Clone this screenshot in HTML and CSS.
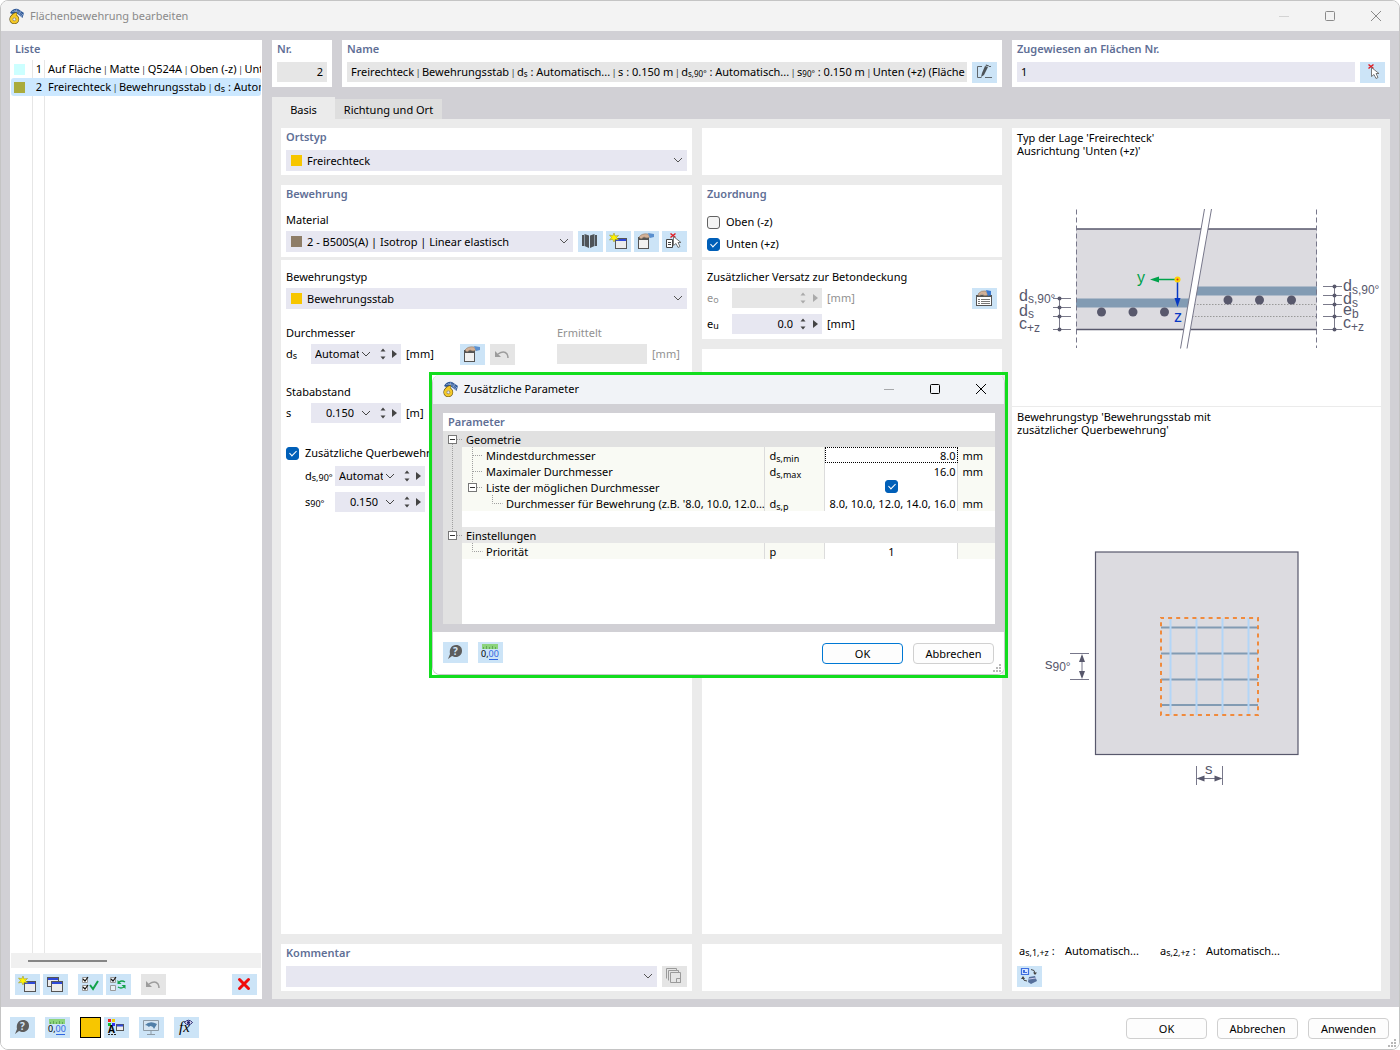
FILE: index.html
```html
<!doctype html>
<html lang="de">
  <head>
    <meta charset="UTF-8" />
    <title>Flächenbewehrung bearbeiten</title>
    <link rel="stylesheet" href="styles.css">
  </head>
  <body>
    <!-- icon sprite, buttons use a 25x21 box -->
    <svg class="sprite" width="0" height="0">
      <symbol id="i-logo" viewBox="0 0 16 16">
        <path d="M2 5Q5 0 10 1L16 5L14.500 10L11 7Q8 4 4 6z" fill="#2d5796" />
        <path d="M4 3.500Q10 2 14 9M6 2.500Q11 2 15 7M8 4L9 1M11 6L13 3M13 8.500l2.500-3" stroke="#a9bfe0" fill="none" stroke-width=".6" />
        <path d="M9 6Q4.500 6.500 3.500 11.500" fill="none" stroke="#6b5a1d" stroke-width="3.800" />
        <circle cx="6.300" cy="11.300" r="3" fill="none" stroke="#6b5a1d" stroke-width="3.800" />
        <path d="M8.600 6Q4.500 6.500 3.500 11.500" fill="none" stroke="#f5c928" stroke-width="2.400" />
        <circle cx="6.300" cy="11.300" r="3" fill="#fff" stroke="#f5c928" stroke-width="2.600" />
        <circle cx="6.300" cy="11.300" r="1.500" fill="#eee" stroke="#6b5a1d" stroke-width=".6" />
      </symbol>
      <symbol id="i-new" viewBox="0 0 25 21">
        <rect x="9.500" y="7.500" width="11" height="10" fill="#ececec" stroke="#555" />
        <path d="M10 9h10" stroke="#2f49d8" stroke-width="2" />
        <path d="M8 2l1 3 3.500-.5L10.500 6.500 12.500 9 9.200 8.300 8 11 6.600 8.300 3.500 9 5.500 6.500 3.500 4 6.800 4.700z" fill="#fff200" stroke="#a09a30" stroke-width=".6" />
      </symbol>
      <symbol id="i-windows" viewBox="0 0 25 21">
        <rect x="4.500" y="3.500" width="11" height="9" fill="#ececec" stroke="#555" />
        <path d="M5 5h10" stroke="#2f49d8" stroke-width="2" />
        <rect x="8.500" y="7.500" width="11" height="10" fill="#ececec" stroke="#555" />
        <path d="M9 9h10" stroke="#2f49d8" stroke-width="2" />
      </symbol>
      <symbol id="i-check-all" viewBox="0 0 25 21">
        <path d="M4.500 3.500h5v5h-5zM4.500 11.500h5v5h-5z" fill="#fff" stroke="#999" />
        <path d="M5 5l2 2 3-4M5 13l2 2 3-4" stroke="#111" stroke-width="1.200" fill="none" />
        <path d="M12 11l3 4 5-8" stroke="#12a34a" stroke-width="2" fill="none" />
      </symbol>
      <symbol id="i-check-swap" viewBox="0 0 25 21">
        <path d="M4.500 3.500h5v5h-5zM4.500 11.500h5v5h-5z" fill="#e6eef6" stroke="#999" />
        <path d="M5 5l2 2 3-4" stroke="#111" stroke-width="1.200" fill="none" />
        <path d="M19 8q-3-2-6 0M12 13q3 2 6 0" stroke="#12a34a" stroke-width="1.500" fill="none" />
        <path d="M11.500 6v4h4zM19.500 15v-4h-4z" fill="#12a34a" />
      </symbol>
      <symbol id="i-undo" viewBox="0 0 25 21">
        <path d="M8 10q6-4 9 0q1 2 1 4" stroke="#9c9c9c" stroke-width="1.500" fill="none" />
        <path d="M5 7v6h6z" fill="#9c9c9c" />
      </symbol>
      <symbol id="i-delete" viewBox="0 0 25 21">
        <path d="M7.500 5.500l9 9M16.500 5.500l-9 9" stroke="#f00c0c" stroke-width="3" stroke-linecap="round" />
      </symbol>
      <symbol id="i-monitor" viewBox="0 0 25 21">
        <path d="M4.500 3.500h15v10h-15zM12 14v3M8 17.500h8" stroke="#8d9aa5" fill="#d5e5f2" />
        <path d="M6 8q5-5 12-1l-3 5q-1-3-4-3l-1 1q-2-2-4-2z" fill="#517fa8" />
      </symbol>
      <symbol id="i-book" viewBox="0 0 25 21">
        <path d="M4 4h2v11H4zM17 4h2v11h-2zM6.500 3l4.500 1.500V17L6.500 15zM16.500 3L12 4.500V17l4.500-2z" fill="#4f5458" />
      </symbol>
      <symbol id="i-edit" viewBox="0 0 25 21">
        <rect x="4.500" y="6.500" width="10" height="11" fill="#f1f1f1" stroke="#555" />
        <path d="M5 8h9" stroke="#555" stroke-width="2" />
        <path d="M5 6Q8 2 14 3L16 6Q13 8 10 6L7 8z" fill="#d3b198" stroke="#8d7a68" stroke-width=".6" />
        <path d="M14 2l6 1v3l-4 1z" fill="#5b90cf" />
      </symbol>
      <symbol id="i-edit-list" viewBox="0 0 25 21">
        <rect x="4.500" y="7.500" width="15" height="10" fill="#fff" stroke="#555" />
        <path d="M4 8h16" stroke="#555" stroke-width="2" />
        <path d="M6 11.500h2M9 11.500h9M6 13.500h2M9 13.500h9M6 15.500h2M9 15.500h9" stroke="#777" />
        <path d="M6 6Q9 2 14 3L16 7Q12 9 10 6L7 8z" fill="#d3b198" stroke="#8d7a68" stroke-width=".6" />
        <path d="M14 2l5 1v4l-3 1z" fill="#3a78d0" />
      </symbol>
      <symbol id="i-pick" viewBox="0 0 25 21">
        <path d="M8.500 2.500l5 4M13.500 2.500l-5 4" stroke="#e01f26" stroke-width="1.500" />
        <path d="M11.500 5.500v9l2.500-2 2 4 2-1-2-4h3z" fill="#fff" stroke="#6a6a6a" stroke-width=".9" />
      </symbol>
      <symbol id="i-pick-list" viewBox="0 0 25 21">
        <path d="M4.500 8.500h6v8h-6z" fill="#fff" stroke="#444" />
        <path d="M6 11.500h3M6 13.500h3" stroke="#444" />
        <path d="M8.500 2.500l5 4M13.500 2.500l-5 4" stroke="#e01f26" stroke-width="1.500" />
        <path d="M11.500 5.500v9l2.500-2 2 4 2-1-2-4h3z" fill="#fff" stroke="#6a6a6a" stroke-width=".9" />
      </symbol>
      <symbol id="i-pencil" viewBox="0 0 25 21">
        <path d="M10 4.500H5.500v11h4M13 15.500h7M17 4.500h2" stroke="#5f676d" fill="none" />
        <path d="M13 4l3 1-4 8-3 2 1-4zM14 2.500l3 1-.5 1-3-1z" fill="#4c5358" />
      </symbol>
      <symbol id="i-copy" viewBox="0 0 25 21">
        <path d="M4.500 12.500v-10h10v2M6.500 14.500v-10h10v2M8.500 6.500h10v10h-10z" fill="none" stroke="#9a9a9a" />
        <path d="M14.500 12.500h4v4h-4z" fill="none" stroke="#9a9a9a" />
      </symbol>
      <symbol id="i-view" viewBox="0 0 25 21">
        <path d="M4.500 2.500h7v6h-7z" fill="#dbe8ff" stroke="#3e6fe0" stroke-width="1.200" />
        <path d="M6 4h2v2h2v1H6z" fill="#3e6fe0" />
        <path d="M14 3.500q4 0 4 4M6 12q0 3 4 3" fill="none" stroke="#444" />
        <path d="M16 6.500h4L18 9zM4 13l2-3 2 3z" fill="#444" />
        <path d="M12 11l6-1 2 5-6 3-3-2z" fill="#56709c" /><path d="M12 13l7-1" stroke="#cce" />
      </symbol>
      <symbol id="i-down" viewBox="0 0 10 6"><path d="M1 1l4 4 4-4" fill="none" stroke="currentColor" /></symbol>
      <symbol id="i-updown" viewBox="0 0 6 12"><path d="M.5 3.500L3 .5l2.500 3zM.5 8.500h5L3 11.500z" fill="currentColor" /></symbol>
      <symbol id="i-right" viewBox="0 0 5 8"><path d="M0 0l5 4-5 4z" fill="currentColor" /></symbol>
      <symbol id="i-min" viewBox="0 0 12 12"><path d="M1 6.500h10" stroke="currentColor" /></symbol>
      <symbol id="i-max" viewBox="0 0 12 12"><rect x="1.500" y="1.500" width="9" height="9" rx="1" fill="none" stroke="currentColor" /></symbol>
      <symbol id="i-close" viewBox="0 0 12 12"><path d="M1 1l10 10M11 1L1 11" stroke="currentColor" /></symbol>
      <symbol id="i-grip" viewBox="0 0 9 9">
        <path d="M6 0h2v2H6zM6 3h2v2H6zM3 3h2v2H3zM6 6h2v2H6zM3 6h2v2H3zM0 6h2v2H0z" fill="#b8b8b8" />
      </symbol>
    </svg>

    <div class="window">
      <header class="titlebar">
        <svg class="logo"><use href="#i-logo" /></svg>
        <h1>Flächenbewehrung bearbeiten</h1>
        <div class="controls">
          <button class="faint" aria-label="Minimieren"><svg><use href="#i-min" /></svg></button>
          <button aria-label="Maximieren"><svg><use href="#i-max" /></svg></button>
          <button aria-label="Schließen"><svg><use href="#i-close" /></svg></button>
        </div>
      </header>

      <div class="workspace">
        <aside class="list">
          <h2>Liste</h2>
          <ul>
            <li><i class="cyan"></i><b>1</b><span>Auf Fläche <s>|</s> Matte <s>|</s> Q524A <s>|</s> Oben (-z) <s>|</s> Unten</span></li>
            <li class="selected"><i class="olive"></i><b>2</b><span>Freirechteck <s>|</s> Bewehrungsstab <s>|</s> d<sub>s</sub> : Autom</span></li>
          </ul>
          <div class="scrollbar"><div class="thumb"></div></div>
          <div class="toolbar">
            <button class="tool" aria-label="Neu"><svg><use href="#i-new" /></svg></button>
            <button class="tool" aria-label="Kopieren"><svg><use href="#i-windows" /></svg></button>
            <button class="tool split" aria-label="Alle wählen"><svg><use href="#i-check-all" /></svg></button>
            <button class="tool" aria-label="Auswahl umkehren"><svg><use href="#i-check-swap" /></svg></button>
            <button class="tool split" aria-label="Rückgängig" disabled><svg><use href="#i-undo" /></svg></button>
            <button class="tool last" aria-label="Löschen"><svg><use href="#i-delete" /></svg></button>
          </div>
        </aside>

        <main>
          <div class="head">
            <section class="card">
              <h2><label for="nr">Nr.</label></h2>
              <input class="box readonly num" id="nr" value="2" readonly>
            </section>
            <section class="card">
              <h2>Name</h2>
              <div class="row">
                <div class="box readonly name">Freirechteck <s>|</s> Bewehrungsstab <s>|</s> d<sub>s</sub> : Automatisch... <s>|</s> s : 0.150 m <s>|</s> d<sub>s,90°</sub> : Automatisch... <s>|</s> s<sub>90°</sub> : 0.150 m <s>|</s> Unten (+z) (Fläche</div>
                <button class="tool" aria-label="Name bearbeiten"><svg><use href="#i-pencil" /></svg></button>
              </div>
            </section>
            <section class="card">
              <h2><label for="assigned">Zugewiesen an Flächen Nr.</label></h2>
              <div class="row">
                <input class="box grow" id="assigned" value="1">
                <button class="tool" aria-label="Fläche wählen"><svg><use href="#i-pick" /></svg></button>
              </div>
            </section>
          </div>

          <nav class="tabs">
            <button class="tab active">Basis</button>
            <button class="tab">Richtung und Ort</button>
          </nav>

          <div class="panel">
            <section class="card end">
              <h2><label for="place">Ortstyp</label></h2>
              <div class="select">
                <i class="yellow"></i>
                <select id="place"><option>Freirechteck</option></select>
                <svg><use href="#i-down" /></svg>
              </div>
            </section>
            <section class="card end"></section>

            <section class="card">
              <h2>Bewehrung</h2>
              <label class="caption" for="material">Material</label>
              <div class="row tight">
                <div class="select">
                  <i class="brown"></i>
                  <select id="material"><option>2 - B500S(A) | Isotrop | Linear elastisch</option></select>
                  <svg><use href="#i-down" /></svg>
                </div>
                <button class="tool first" aria-label="Bibliothek"><svg><use href="#i-book" /></svg></button>
                <button class="tool" aria-label="Neues Material"><svg><use href="#i-new" /></svg></button>
                <button class="tool" aria-label="Material bearbeiten"><svg><use href="#i-edit" /></svg></button>
                <button class="tool" aria-label="Material wählen"><svg><use href="#i-pick-list" /></svg></button>
              </div>
            </section>
            <section class="card">
              <h2>Zuordnung</h2>
              <div class="checks">
                <label class="check"><input type="checkbox">Oben (-z)</label>
                <label class="check"><input type="checkbox" checked>Unten (+z)</label>
              </div>
            </section>

            <section class="card end">
              <label class="caption" for="type">Bewehrungstyp</label>
              <div class="select">
                <i class="yellow"></i>
                <select id="type"><option>Bewehrungsstab</option></select>
                <svg><use href="#i-down" /></svg>
              </div>
              <div class="diameter">
                <div class="diameter-value">
                  <label class="caption" for="ds">Durchmesser</label>
                  <div class="row">
                    <span class="symbol">d<sub>s</sub></span>
                    <div class="spin combo"><input id="ds" value="Automatisch"><svg class="down"><use href="#i-down" /></svg><svg class="updown"><use href="#i-updown" /></svg><svg class="right"><use href="#i-right" /></svg></div>
                    <span>[mm]</span>
                    <button class="tool last" aria-label="Parameter"><svg><use href="#i-edit" /></svg></button>
                    <button class="tool" aria-label="Zurücksetzen" disabled><svg><use href="#i-undo" /></svg></button>
                  </div>
                </div>
                <div class="muted">
                  <label class="caption" for="found">Ermittelt</label>
                  <div class="row">
                    <input class="box readonly found" id="found" disabled>
                    <span>[mm]</span>
                  </div>
                </div>
              </div>
              <label class="caption far" for="spacing">Stababstand</label>
              <div class="row">
                <span class="symbol">s</span>
                <div class="spin combo num"><input id="spacing" value="0.150"><svg class="down"><use href="#i-down" /></svg><svg class="updown"><use href="#i-updown" /></svg><svg class="right"><use href="#i-right" /></svg></div>
                <span>[m]</span>
              </div>
              <label class="check cross"><input type="checkbox" checked>Zusätzliche Querbewehrung</label>
              <div class="row nested">
                <label class="symbol" for="ds90">d<sub>s,90°</sub></label>
                <div class="spin combo"><input id="ds90" value="Automatisch"><svg class="down"><use href="#i-down" /></svg><svg class="updown"><use href="#i-updown" /></svg><svg class="right"><use href="#i-right" /></svg></div>
                <span>[mm]</span>
              </div>
              <div class="row nested">
                <label class="symbol" for="s90">s<sub>90°</sub></label>
                <div class="spin combo num"><input id="s90" value="0.150"><svg class="down"><use href="#i-down" /></svg><svg class="updown"><use href="#i-updown" /></svg><svg class="right"><use href="#i-right" /></svg></div>
                <span>[m]</span>
              </div>
            </section>
            <div class="stack end">
              <section class="card offset">
                <span class="caption">Zusätzlicher Versatz zur Betondeckung</span>
                <div class="row muted">
                  <label class="symbol" for="eo">e<sub>o</sub></label>
                  <div class="spin off"><input id="eo" disabled><svg class="updown"><use href="#i-updown" /></svg><svg class="right"><use href="#i-right" /></svg></div>
                  <span>[mm]</span>
                  <button class="tool last" aria-label="Versatz bearbeiten"><svg><use href="#i-edit-list" /></svg></button>
                </div>
                <div class="row next">
                  <label class="symbol" for="eu">e<sub>u</sub></label>
                  <div class="spin num"><input id="eu" value="0.0"><svg class="updown"><use href="#i-updown" /></svg><svg class="right"><use href="#i-right" /></svg></div>
                  <span>[mm]</span>
                </div>
              </section>
              <section class="card grow"></section>
            </div>

            <section class="card">
              <h2><label for="comment">Kommentar</label></h2>
              <div class="row">
                <div class="select">
                  <select id="comment"><option></option></select>
                  <svg><use href="#i-down" /></svg>
                </div>
                <button class="tool" aria-label="Kommentare" disabled><svg><use href="#i-copy" /></svg></button>
              </div>
            </section>
            <section class="card"></section>

            <section class="card preview">
              <div class="preview-top">
                <p>Typ der Lage 'Freirechteck'<br>Ausrichtung 'Unten (+z)'</p>
                <svg class="drawing" viewBox="0 0 369 160">
                  <path d="M64 29H305V130H64z" fill="#dcdbe0" />
                  <path d="M64 98.500H177V107.500H64zM184 86.500H305V95.500H184z" fill="#829bb3" />
                  <path d="M64 29H305M64 129.500H305" stroke="#58586c" stroke-width="1.600" />
                  <path d="M179 104.500H305M177 116.500H305" stroke="#999" stroke-dasharray="1.500 1.500" />
                  <path d="M192.500 9L199.500 9L175 148.500H168.500z" fill="#fff" />
                  <path d="M192.500 9L168.500 148.500M199.500 9L175 148.500" stroke="#77778a" />
                  <path d="M64.500 9.500V148M304.500 9.500V148" stroke="#77778a" stroke-dasharray="5 3" />
                  <g fill="#58586c">
                    <circle cx="89.500" cy="112" r="4.500" /><circle cx="121" cy="112" r="4.500" /><circle cx="152.500" cy="112" r="4.500" />
                    <circle cx="216" cy="100" r="4.500" /><circle cx="247.500" cy="100" r="4.500" /><circle cx="279.500" cy="100" r="4.500" />
                    <circle cx="47.500" cy="98.500" r="2" /><circle cx="47.500" cy="107.500" r="2" /><circle cx="47.500" cy="116.500" r="2" /><circle cx="47.500" cy="129.500" r="2" />
                    <circle cx="322.500" cy="86.500" r="2" /><circle cx="322.500" cy="95.500" r="2" /><circle cx="322.500" cy="104.500" r="2" /><circle cx="322.500" cy="116.500" r="2" /><circle cx="322.500" cy="129.500" r="2" />
                    <text x="7" y="101">d<tspan class="sub" dy="2">s,90°</tspan></text>
                    <text x="7" y="116">d<tspan class="sub" dy="2">s</tspan></text>
                    <text x="7" y="129">c<tspan class="sub" dy="3">+z</tspan></text>
                    <text x="331" y="91">d<tspan class="sub" dy="3">s,90°</tspan></text>
                    <text x="331" y="104">d<tspan class="sub" dy="3">s</tspan></text>
                    <text x="331" y="115">e<tspan class="sub" dy="3">b</tspan></text>
                    <text x="331" y="128">c<tspan class="sub" dy="3">+z</tspan></text>
                  </g>
                  <path d="M47.500 98v32M41 98.500h18M41 107.500h18M41 116.500h18M41 129.500h18M322.500 86v44M311 86.500h19M311 95.500h19M311 104.500h19M311 116.500h19M311 129.500h19" stroke="#58586c" fill="none" stroke-width=".8" />
                  <path d="M163 79.500H145" stroke="#00a24b" stroke-width="1.500" /><path d="M138 79.500l9-3v6z" fill="#00a24b" />
                  <path d="M165.500 82v16" stroke="#0638c4" stroke-width="1.500" /><path d="M165.500 107l-3-9h6z" fill="#0638c4" />
                  <circle cx="165.500" cy="79.500" r="3" fill="#ffd500" /><circle cx="165.500" cy="79.500" r="1" fill="#d22" />
                  <text x="125" y="83" fill="#00a24b">y</text>
                  <text x="162" y="122" fill="#0638c4">z</text>
                </svg>
              </div>
              <div class="preview-bottom">
                <p>Bewehrungstyp 'Bewehrungsstab mit<br>zusätzlicher Querbewehrung'</p>
                <svg class="drawing" viewBox="0 0 369 260">
                  <rect x="83.500" y="12" width="202.500" height="202.500" fill="#dcdbe0" stroke="#58586c" stroke-width="1.200" />
                  <path d="M149 87.500h97M149 113.500h97M149 139.500h97M149 165h97" stroke="#829bb3" stroke-width="2" />
                  <path d="M158.500 78v97M184.500 78v97M210.500 78v97M236.500 78v97" stroke="#b3d6f7" stroke-width="2" />
                  <rect x="149" y="78" width="97" height="97" fill="none" stroke="#f08a3c" stroke-width="2" stroke-dasharray="4 4.100" stroke-dashoffset="1" />
                  <path d="M58 113.500h19M58 139.500h19M184.500 226v19M210.500 226v19M70 116v21M187 238.500h21" stroke="#77778a" fill="none" />
                  <path d="M70 114l3 8h-6zM70 139l3-8h-6zM184.500 238.500l8-3v6zM210.500 238.500l-8-3v6z" fill="#58586c" />
                  <text x="33" y="129" fill="#58586c" class="dim">s<tspan class="sub" dy="2">90°</tspan></text>
                  <text x="193" y="234" fill="#58586c" class="dim">s</text>
                </svg>
                <div class="areas">
                  <span>a<sub>s,1,+z</sub> :</span><span>Automatisch...</span>
                  <span>a<sub>s,2,+z</sub> :</span><span>Automatisch...</span>
                </div>
                <button class="tool" aria-label="Ansicht wechseln"><svg><use href="#i-view" /></svg></button>
              </div>
            </section>
          </div>
        </main>
      </div>

      <footer>
        <button class="tool" aria-label="Hilfe">
          <svg viewBox="0 0 25 21">
            <path d="M13 3c4 0 6 2.500 6 6s-3 6-6 6c-1.500 0-3-.5-4-1l-4 3 2-5c-1-5 1.500-9 6-9z" fill="#5d5d5d" />
            <text x="10" y="13" class="help-text">?</text>
          </svg>
        </button>
        <button class="tool" aria-label="Einheiten">
          <svg viewBox="0 0 25 21">
            <path d="M4 2h16v5H4z" fill="#8cd47c" />
            <path d="M5.500 5v2M8.500 4v3M11.500 5v2M14.500 4v3M17.500 5v2" stroke="#448a3c" stroke-width=".6" />
            <text x="3" y="15" class="unit-text">0,<tspan fill="#2f66e0">00</tspan></text>
            <path d="M11 17.500h9" stroke="#2f66e0" />
          </svg>
        </button>
        <div class="pair">
          <button class="color" aria-label="Farbe"></button>
          <button class="tool" aria-label="Anzeige">
            <svg viewBox="0 0 25 21">
              <path d="M4 2h3v3H4z" fill="#e22" /><path d="M8 2h3v3H8z" fill="#ec0" />
              <path d="M4 6h3v3H4z" fill="#1b3" /><path d="M8 6h3v3H8z" fill="#33e" />
              <text x="4" y="16" class="letter-text">A</text>
              <path d="M4 17.500h9" stroke="#222" stroke-dasharray="2 1" />
              <rect x="12.500" y="7.500" width="7" height="6" fill="#ececec" stroke="#555" />
              <path d="M13 8.500h6" stroke="#2f49d8" stroke-width="2" />
            </svg>
          </button>
        </div>
        <button class="tool" aria-label="Vorschau"><svg><use href="#i-monitor" /></svg></button>
        <button class="tool" aria-label="Formel">
          <svg viewBox="0 0 25 21">
            <text x="5" y="15" class="fx-text">fx</text>
            <path d="M10.500 5.500q4-4.500 8 0q-4 4.500-8 0z" fill="#eef" stroke="#24246e" />
            <circle cx="14.500" cy="5.500" r="1.600" fill="#24246e" />
          </svg>
        </button>
        <div class="actions">
          <button class="push">OK</button>
          <button class="push">Abbrechen</button>
          <button class="push">Anwenden</button>
        </div>
        <svg class="grip"><use href="#i-grip" /></svg>
      </footer>
    </div>

    <div class="highlight">
      <div class="dialog" role="dialog" aria-labelledby="dialog-title">
        <header class="titlebar">
          <svg class="logo"><use href="#i-logo" /></svg>
          <h1 id="dialog-title">Zusätzliche Parameter</h1>
          <div class="controls">
            <button class="faint" aria-label="Minimieren"><svg><use href="#i-min" /></svg></button>
            <button aria-label="Maximieren"><svg><use href="#i-max" /></svg></button>
            <button aria-label="Schließen"><svg><use href="#i-close" /></svg></button>
          </div>
        </header>
        <div class="dialog-body">
          <div class="params">
            <h2>Parameter</h2>
            <div class="tree">
              <table>
                <colgroup><col class="c-gutter"><col><col class="c-symbol"><col class="c-value"><col class="c-unit"></colgroup>
                <tr class="group dark"><td><button class="toggle" aria-label="Zuklappen"></button></td><th colspan="4">Geometrie</th></tr>
                <tr><td></td><td class="l1">Mindestdurchmesser</td><td>d<sub>s,min</sub></td><td class="value focus">8.0</td><td>mm</td></tr>
                <tr><td></td><td class="l1">Maximaler Durchmesser</td><td>d<sub>s,max</sub></td><td class="value">16.0</td><td>mm</td></tr>
                <tr><td></td><td class="l1"><button class="toggle inner" aria-label="Zuklappen"></button>Liste der möglichen Durchmesser</td><td></td><td class="value center"><input type="checkbox" checked aria-label="Liste der möglichen Durchmesser"></td><td></td></tr>
                <tr><td></td><td class="l2">Durchmesser für Bewehrung (z.B. '8.0, 10.0, 12.0...</td><td>d<sub>s,p</sub></td><td class="value">8.0, 10.0, 12.0, 14.0, 16.0</td><td>mm</td></tr>
                <tr class="blank"><td></td><td colspan="4"></td></tr>
                <tr class="group"><td><button class="toggle" aria-label="Zuklappen"></button></td><th colspan="4">Einstellungen</th></tr>
                <tr><td></td><td class="l1">Priorität</td><td>p</td><td class="value center">1</td><td></td></tr>
              </table>
              <svg class="branches" width="70" height="128">
                <path d="M9.500 13V100M14 8.500h6M14 104.500h6M29.500 16V52M30 24.500h10M30 40.500h10M34 56.500h6M49.500 64v8.500h10M29.500 112v8.500h10" />
              </svg>
            </div>
          </div>
        </div>
        <footer>
          <button class="tool" aria-label="Hilfe">
            <svg viewBox="0 0 25 21">
              <path d="M13 3c4 0 6 2.500 6 6s-3 6-6 6c-1.500 0-3-.5-4-1l-4 3 2-5c-1-5 1.500-9 6-9z" fill="#5d5d5d" />
              <text x="10" y="13" class="help-text">?</text>
            </svg>
          </button>
          <button class="tool" aria-label="Einheiten">
            <svg viewBox="0 0 25 21">
              <path d="M4 2h16v5H4z" fill="#8cd47c" />
              <path d="M5.500 5v2M8.500 4v3M11.500 5v2M14.500 4v3M17.500 5v2" stroke="#448a3c" stroke-width=".6" />
              <text x="3" y="15" class="unit-text">0,<tspan fill="#2f66e0">00</tspan></text>
              <path d="M11 17.500h9" stroke="#2f66e0" />
            </svg>
          </button>
          <div class="actions">
            <button class="push primary">OK</button>
            <button class="push">Abbrechen</button>
          </div>
          <svg class="grip"><use href="#i-grip" /></svg>
        </footer>
      </div>
    </div>
  </body>
</html>
```

FILE: styles.css
```css
* {
  box-sizing: border-box;
}
body {
  margin: 0;
  position: relative;
  font-family: "Noto Sans", "Open Sans", sans-serif;
  font-size: 11px;
  line-height: 16px;
  color: #000;
  background: #fff;
}
button,
input,
select {
  font: inherit;
  color: inherit;
  margin: 0;
  padding: 0;
  border: 0;
  border-radius: 0;
  background: none;
  outline: none;
}
h1,
h2,
p,
ul {
  margin: 0;
  padding: 0;
}
h1 {
  font-size: 11px;
  font-weight: 400;
}
h2 {
  font-size: 11px;
  line-height: 18px;
  font-weight: 600;
  color: #5f6f96;
}
sub {
  font-size: 9px;
  line-height: 0;
  vertical-align: -1px;
}
/* thin separator bar */
s {
  font-family: "Liberation Serif", serif;
  text-decoration: none;
}
.sprite {
  position: absolute;
}
.window {
  min-height: 100vh;
  display: flex;
  flex-direction: column;
  border: 1px solid #c4c4c4;
  border-radius: 8px;
  overflow: hidden;
}

/* title bars */
.titlebar {
  height: 30px;
  display: flex;
  align-items: center;
  gap: 6px;
  padding-left: 7px;
  background: #f3f3f3;
  color: #8a8a8a;
}
.logo {
  width: 16px;
  height: 16px;
}
.controls {
  margin-left: auto;
  display: flex;
}
.controls button {
  width: 46px;
  height: 26px;
  display: flex;
  align-items: center;
  justify-content: center;
}
.controls svg {
  width: 12px;
  height: 12px;
}
.controls .faint {
  opacity: 0.3;
}

.workspace {
  flex: 1;
  display: flex;
  gap: 10px;
  padding: 9px 9px 8px;
  background: #d1d0d5;
}

/* list on the left */
.list {
  flex: none;
  width: 252px;
  display: flex;
  flex-direction: column;
  background: #fff;
  padding-bottom: 4px;
}
.list h2 {
  padding: 0 5px;
}
.list ul {
  flex: 1;
  list-style: none;
  margin: 2px 1px 0;
  background: linear-gradient(#e6e6e6, #e6e6e6) 21px 0 / 1px 100% no-repeat,
    linear-gradient(#e6e6e6, #e6e6e6) 33px 0 / 1px 100% no-repeat;
}
.list li {
  height: 18px;
  line-height: 18px;
  display: flex;
  align-items: center;
  padding-left: 3px;
  white-space: nowrap;
  overflow: hidden;
  border-radius: 3px;
}
.list li.selected {
  background: #cce8ff;
}
.list i {
  flex: none;
  width: 11px;
  height: 11px;
}
.list b {
  flex: none;
  width: 17px;
  margin-right: 6px;
  text-align: right;
  font-weight: 400;
}
.scrollbar {
  height: 15px;
  margin: 0 1px 6px;
  background: #f0f0f0;
  display: flex;
  align-items: center;
}
.thumb {
  width: 79px;
  height: 2px;
  margin-left: 17px;
  background: #868686;
}
.toolbar {
  display: flex;
  gap: 3px;
  padding: 0 5px;
}
.toolbar .split {
  margin-left: 7px;
}

.cyan {
  background: #ccffff;
}
.olive {
  background: #aaab3c;
}
.yellow {
  background: #f7c600;
}
.brown {
  background: #8e7d67;
}

/* buttons */
.tool {
  flex: none;
  width: 25px;
  height: 21px;
  background: #cce4f7;
}
.tool:disabled {
  background: #e5e5e5;
}
.tool svg {
  display: block;
  width: 25px;
  height: 21px;
}
.last {
  margin-left: auto;
}
.help-text {
  font-size: 10px;
  font-weight: 700;
  fill: #d5e6f5;
}
.unit-text {
  font-size: 9px;
}
.letter-text {
  font-size: 10px;
  font-weight: 700;
}
.fx-text {
  font: italic 15px "Liberation Serif", serif;
}
.push {
  width: 81px;
  height: 21px;
  background: #fdfdfd;
  border: 1px solid #d0d0d0;
  border-radius: 4px;
}
.push.primary {
  border-color: #0078d4;
}

/* main area */
main {
  flex: 1;
  min-width: 0;
  display: flex;
  flex-direction: column;
}
.head {
  display: grid;
  grid-template-columns: 60px minmax(0, 660fr) minmax(0, 378fr);
  gap: 10px;
}
.card {
  min-width: 0;
  min-height: 47px;
  padding: 0 5px 4px;
  background: #fff;
}
.card > h2 {
  margin-bottom: 4px;
}
.row {
  display: flex;
  align-items: flex-start;
  gap: 5px;
  min-height: 21px;
  line-height: 20px;
}
.row.tight {
  gap: 3px;
}
.tight .first {
  margin-left: 2px;
}
.box {
  width: 100%;
  height: 20px;
  padding: 0 4px;
  line-height: 20px;
  background: #e7e7f1;
}
.readonly {
  background: #e6e6e6;
}
.name {
  flex: 1;
  min-width: 0;
  padding-right: 0;
  white-space: nowrap;
  overflow: hidden;
}
.name sub {
  font-size: 8px;
}
.num,
.num input {
  text-align: right;
}
.grow {
  flex: 1;
}

.tabs {
  display: flex;
  align-items: flex-end;
  height: 22px;
  margin-top: 10px;
}
.tab {
  width: 107px;
  height: 20px;
  padding-top: 2px;
  background: #dedede;
}
.tab.active {
  width: 63px;
  height: 22px;
  padding-top: 4px;
  background: #ebebeb;
}

.panel {
  flex: 1;
  display: grid;
  grid-template-columns: minmax(0, 411fr) minmax(0, 300fr) minmax(0, 369fr);
  grid-template-rows: auto auto 1fr auto;
  gap: 3px 10px;
  padding: 9px 9px 8px;
  background: #ebebeb;
}
.end {
  margin-bottom: 7px;
}
.stack {
  display: flex;
  flex-direction: column;
  gap: 10px;
}
.caption {
  display: block;
  margin: 9px 0 3px;
}
.caption.far {
  margin-top: 19px;
}
.card h2 + .caption {
  margin-top: 5px;
  padding-top: 4px;
}
.muted {
  color: #919191;
}

.select {
  flex: 1;
  min-width: 0;
  position: relative;
  height: 21px;
  background: #e7e7f1;
}
.select select {
  display: block;
  width: 100%;
  height: 21px;
  padding-left: 21px;
  appearance: none;
}
.select i {
  position: absolute;
  left: 5px;
  top: 5px;
  width: 11px;
  height: 11px;
}
.select svg {
  position: absolute;
  right: 4px;
  top: 7px;
  width: 10px;
  height: 6px;
  color: #555;
  pointer-events: none;
}

.spin {
  flex: none;
  width: 90px;
  height: 20px;
  display: flex;
  align-items: center;
  gap: 5px;
  padding: 0 4px;
  background: #e7e7f1;
}
.spin input {
  flex: 1;
  min-width: 0;
}
.spin.off {
  background: #e6e6e6;
}
.spin svg {
  flex: none;
  color: #444;
}
.spin.off svg {
  color: #aaa;
}
.spin .down {
  width: 10px;
  height: 6px;
  margin-right: 3px;
}
.spin .updown {
  width: 6px;
  height: 12px;
  margin: 0 2px;
}
.spin .right {
  width: 5px;
  height: 8px;
}
.spin.combo {
  gap: 2px;
}
.combo .updown {
  margin: 0 4px;
}
.combo.num input {
  padding-right: 5px;
}
.symbol {
  flex: none;
  width: 20px;
}
.nested {
  margin-top: 5px;
  padding-left: 19px;
}
.nested .symbol {
  width: 25px;
}

.diameter {
  display: flex;
  margin-top: 16px;
}
.diameter .caption {
  margin-top: 0;
}
.diameter-value {
  width: 229px;
  margin-right: 42px;
}
.found {
  width: 90px;
}
.offset .next {
  margin-top: 5px;
}

.checks {
  display: flex;
  flex-direction: column;
  gap: 6px;
  padding: 7px 0 1px;
}
.check {
  display: flex;
  align-items: center;
  gap: 6px;
}
.cross {
  margin-top: 21px;
}
input[type="checkbox"] {
  appearance: none;
  flex: none;
  width: 13px;
  height: 13px;
  border: 1px solid #626262;
  border-radius: 3px;
  background: #f4f4f4;
}
input[type="checkbox"]:checked {
  border-color: #005fb8;
  background: #005fb8;
}
input[type="checkbox"]:checked::before {
  content: "";
  display: block;
  width: 3px;
  height: 6px;
  margin: 1px 4px;
  border: solid #fff;
  border-width: 0 1px 1px 0;
  transform: rotate(45deg);
}

/* preview drawings */
.preview {
  grid-column: 3;
  grid-row: 1 / 5;
  padding: 0;
  display: flex;
  flex-direction: column;
}
.preview p {
  padding: 3px 5px;
  line-height: 13px;
}
.preview-top {
  height: 279px;
  border-bottom: 1px solid #ebebeb;
}
.preview-bottom {
  flex: 1;
  display: flex;
  flex-direction: column;
}
.drawing {
  display: block;
  width: 100%;
  max-width: 369px;
  font-family: "Liberation Sans", Arial, sans-serif;
  font-size: 16px;
}
.preview-top .drawing {
  margin-top: 40px;
}
.preview-bottom .drawing {
  margin-top: 101px;
}
.drawing .sub {
  font-size: 12px;
}
.drawing .dim {
  font-size: 15px;
}
.areas {
  margin-top: auto;
  display: grid;
  grid-template-columns: 46px 95px 46px 95px;
  padding-left: 7px;
  white-space: nowrap;
}
.preview-bottom .tool {
  margin: 7px 5px 4px;
}

/* bottom bars */
footer {
  position: relative;
  display: flex;
  gap: 10px;
  height: 42px;
  padding: 10px 10px 0 9px;
  background: #fff;
}
.actions {
  margin-left: auto;
  display: flex;
  gap: 10px;
  padding-top: 1px;
}
.pair {
  display: flex;
  gap: 3px;
}
.color {
  width: 21px;
  height: 21px;
  background: #f7c600;
  border: 1px solid #000;
}
.grip {
  position: absolute;
  right: 2px;
  bottom: 1px;
  width: 9px;
  height: 9px;
}

/* dialog on top, with the green frame */
.highlight {
  position: absolute;
  left: 429px;
  top: 372px;
  width: 579px;
  border: 3px solid #12dd1e;
}
.dialog {
  border: 1px solid #c8c8cc;
  border-top: 0;
  border-radius: 8px;
  background: #fff;
  overflow: hidden;
}
.dialog .titlebar {
  height: 29px;
  padding: 0 0 2px 9px;
  background: #f1f3f7;
  color: #000;
}
.dialog footer {
  padding-left: 10px;
}
.dialog-body {
  padding: 9px 9px 8px 10px;
  background: #d1d0d5;
}
.params {
  height: 211px;
  background: #fff;
}
.params h2 {
  padding-left: 5px;
}
.tree {
  position: relative;
  height: 193px;
  background: linear-gradient(#e1e1e1, #e1e1e1) 0 0 / 19px 100% no-repeat;
}
.tree table {
  width: 100%;
  table-layout: fixed;
  border-collapse: collapse;
}
.c-gutter {
  width: 19px;
}
.c-symbol {
  width: 60px;
}
.c-value {
  width: 133px;
}
.c-unit {
  width: 37px;
}
.tree td,
.tree th {
  height: 16px;
  padding: 1px 0 0 4px;
  line-height: 15px;
  font-weight: 400;
  text-align: left;
  vertical-align: top;
  white-space: nowrap;
  background: #f9faf4;
  border-left: 1px solid #dcdcdc;
}
.tree tr td:first-child {
  position: relative;
  padding: 0;
  background: #e1e1e1;
  border-left: 0;
}
.tree tr td:nth-child(2),
.tree th {
  border-left: 0;
}
.tree .group th {
  background: #e7e7e7;
}
.tree .dark th {
  background: #e1e1e1;
}
.tree .blank td:nth-child(2) {
  background: #fff;
}
.tree td.l1 {
  position: relative;
  padding-left: 24px;
}
.tree td.l2 {
  padding-left: 44px;
}
.tree td.value {
  padding-left: 2px;
  padding-right: 2px;
  text-align: right;
  background: #fff;
}
.tree td.center {
  text-align: center;
}
.tree td.focus {
  outline: 1px dotted #000;
  outline-offset: -1px;
}
.tree td input {
  display: block;
  margin: 0 auto;
}
.tree sub {
  vertical-align: -2px;
}
.toggle {
  position: absolute;
  left: 5px;
  top: 4px;
  width: 9px;
  height: 9px;
  border: 1px solid #777;
  background: linear-gradient(#333, #333) center / 5px 1px no-repeat #fff;
}
.toggle.inner {
  left: 6px;
}
.branches {
  position: absolute;
  left: 0;
  top: 0;
  fill: none;
  stroke: #a0a0a0;
  stroke-dasharray: 1 1;
  pointer-events: none;
}
```
